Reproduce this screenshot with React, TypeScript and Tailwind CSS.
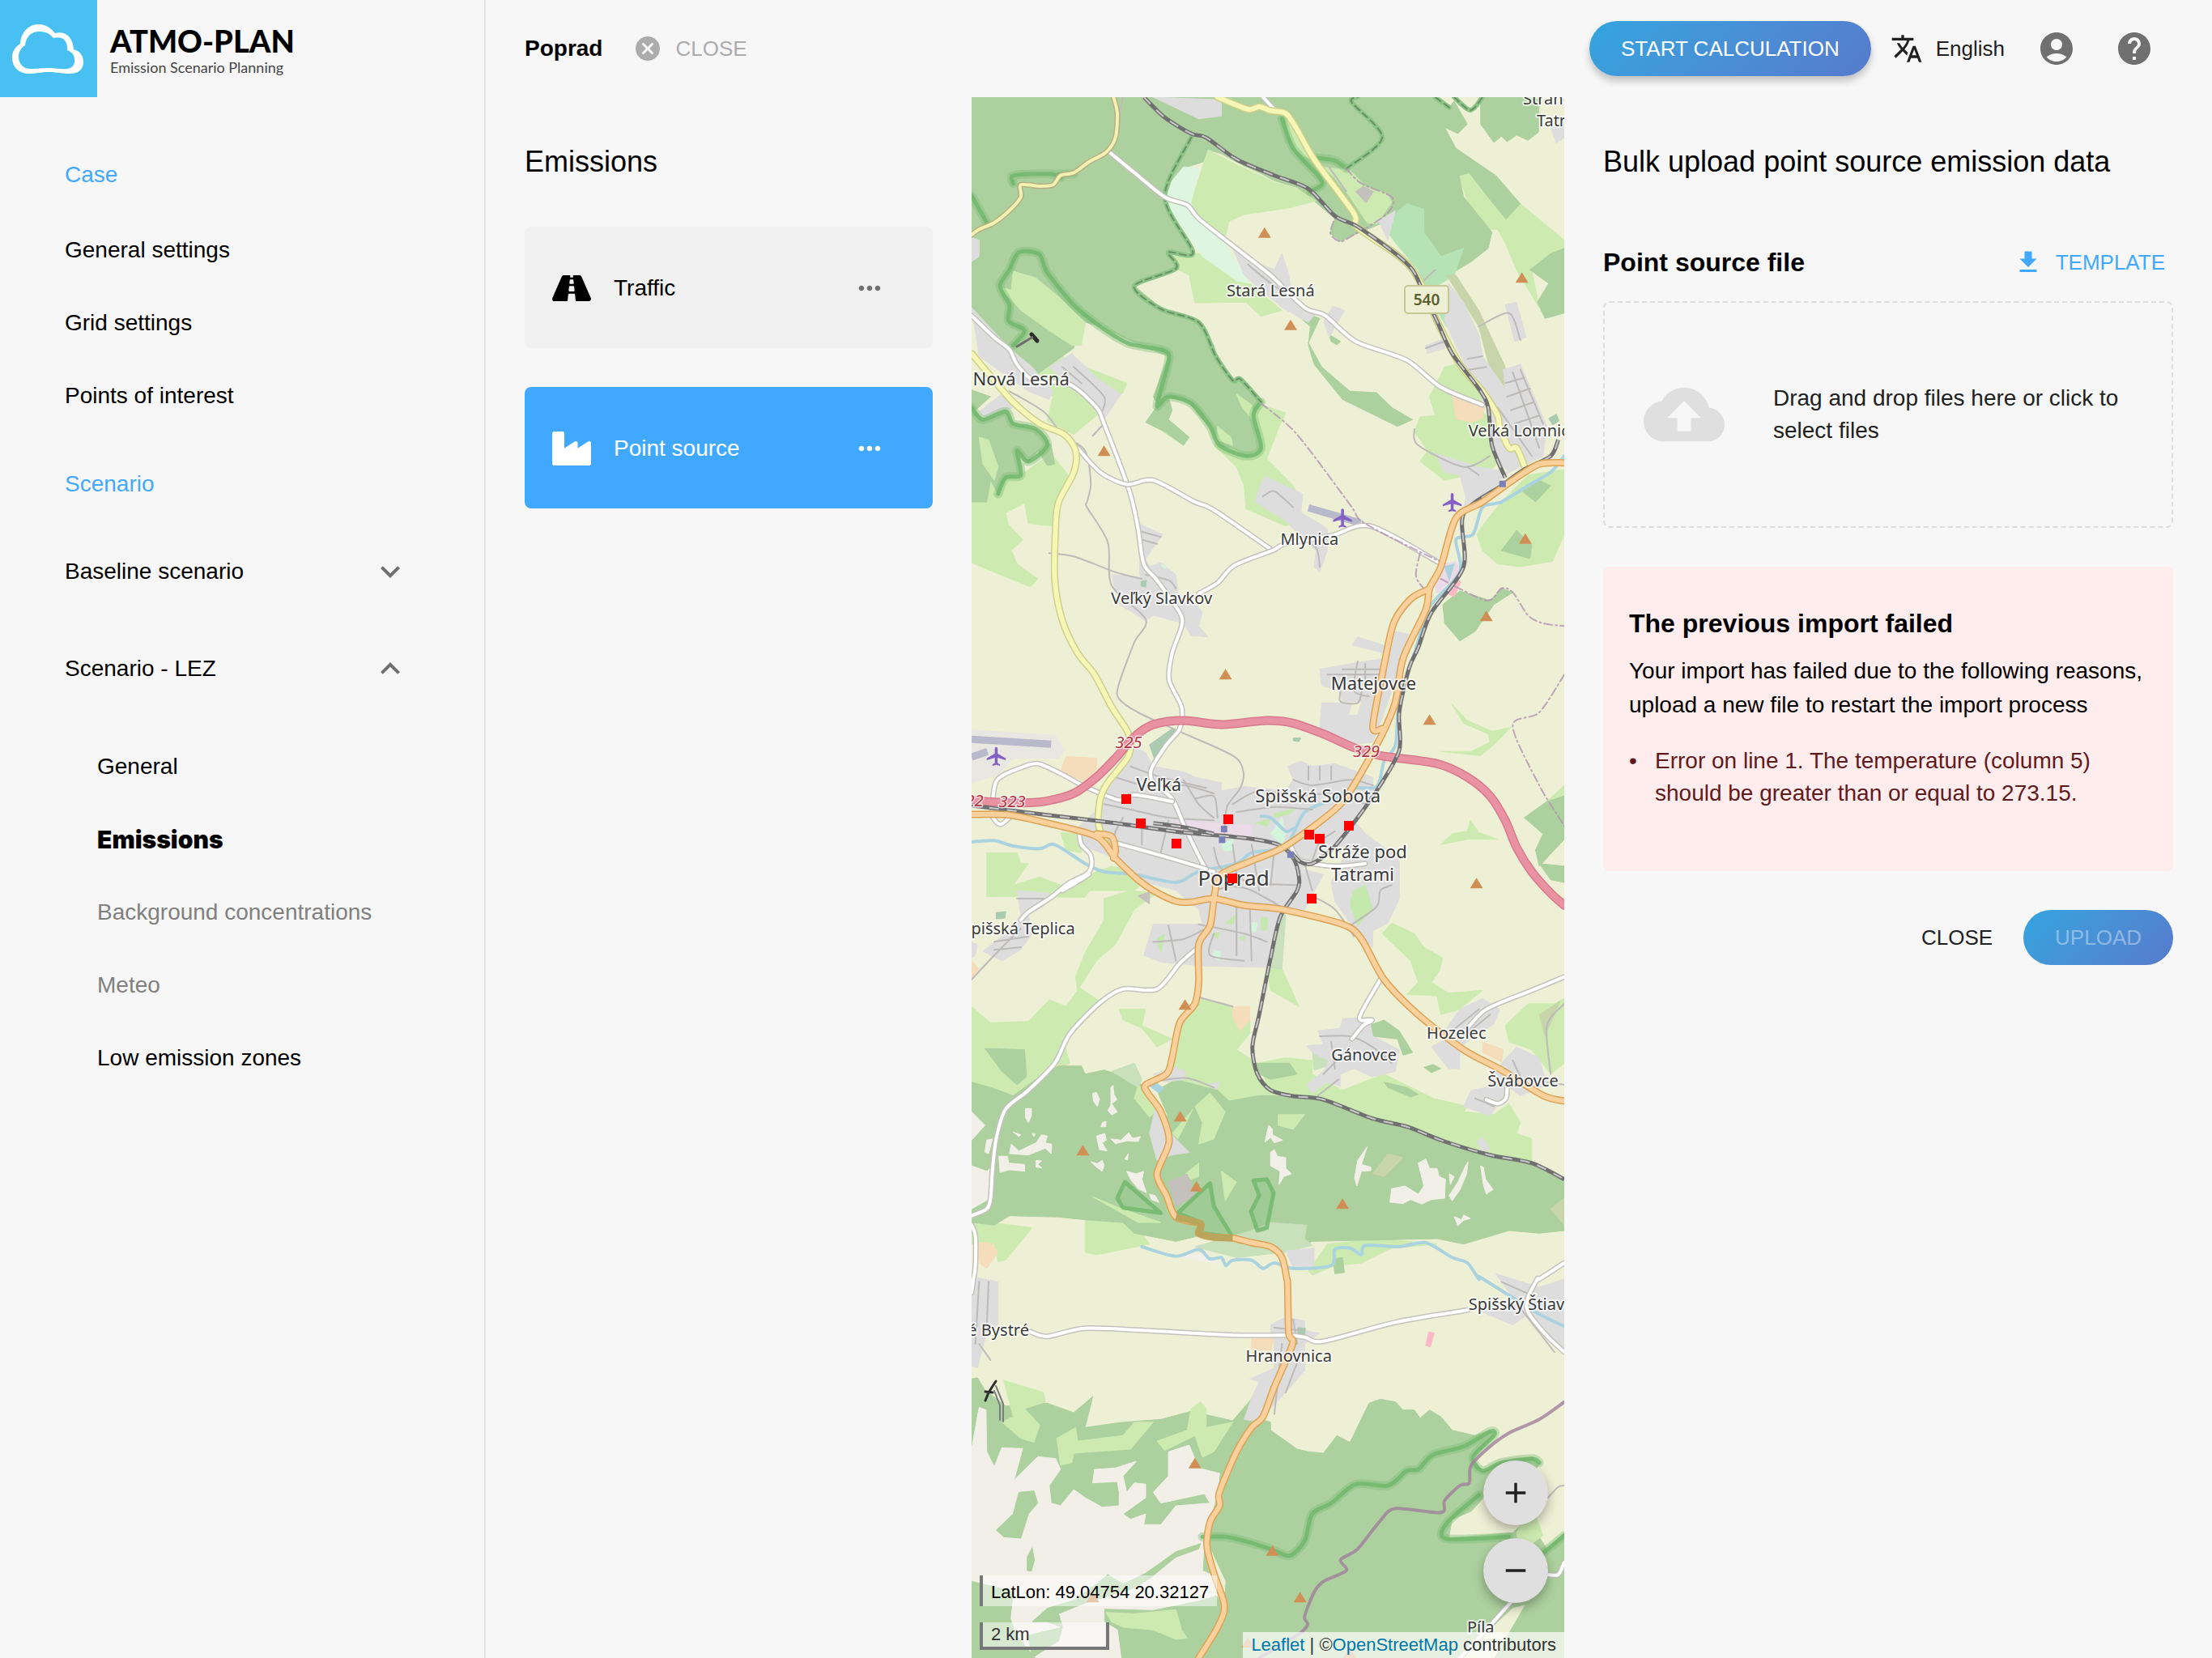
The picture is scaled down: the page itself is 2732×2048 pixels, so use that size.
import type { ReactNode } from "react";
import { FaIndustry, FaRoad } from "react-icons/fa";
import {
  MdAccountCircle,
  MdAdd,
  MdAirplanemodeActive,
  MdCancel,
  MdCloudUpload,
  MdExpandLess,
  MdExpandMore,
  MdGetApp,
  MdHelp,
  MdMoreHoriz,
  MdRemove,
  MdTranslate,
} from "react-icons/md";

/* ------------------------------------------------------------------ */
/* Map geometry                                                        */
/* ------------------------------------------------------------------ */

type Pt = [number, number];

const SHEET_TOP: Record<string, number> = { A: 0, B: 480, C: 960, D: 1440 };
const SX = 732 / 1566;
const SY = 1 / 3;

// "A 10,20 30,40 B 5,6": a sheet letter followed by points on that sheet.
function pts(src: string): Pt[] {
  let top = 0;
  const out: Pt[] = [];
  for (const token of src.trim().split(/\s+/)) {
    if (token in SHEET_TOP) {
      top = SHEET_TOP[token];
      continue;
    }
    const [x, y] = token.split(",").map(Number);
    out.push([Math.round(x * SX * 10) / 10, Math.round((y * SY + top) * 10) / 10]);
  }
  return out;
}

const polygon = (src: string) => "M" + pts(src).map((p) => p.join(" ")).join("L") + "Z";

function curve(src: string): string {
  const p = pts(src);
  let d = `M${p[0][0]} ${p[0][1]}`;
  for (let i = 0; i < p.length - 1; i++) {
    const a = p[Math.max(i - 1, 0)];
    const b = p[i];
    const c = p[i + 1];
    const e = p[Math.min(i + 2, p.length - 1)];
    const r = (n: number) => Math.round(n * 10) / 10;
    d += `C${r(b[0] + (c[0] - a[0]) / 7)} ${r(b[1] + (c[1] - a[1]) / 7)} ${r(c[0] - (e[0] - b[0]) / 7)} ${r(c[1] - (e[1] - b[1]) / 7)} ${c[0]} ${c[1]}`;
  }
  return d;
}

const FOREST = "#add19e";
const MEADOW = "#cdebb0";
const TOWN = "#dddddd";
const BARE = "#f2efe9";
const SAND = "#f5dcba";
const FARM = "#eef0d5";

const AREAS: [string, string[]][] = [
  [
    MEADOW,
    [
      "A 1288,290 1315,278 1412,452 1450,395 1566,530 1566,600 1480,640 1500,780 1440,640 1410,540 1390,490 1365,490 1320,430",
      "A 1250,1000 1280,990 1350,1100 1345,1150 1420,1300 1375,1380 1250,1420 1185,1350 1205,1310 1170,1240 1185,1185 1225,1180 1210,1110",
      "A 765,1140 830,1170 810,1230 780,1340 850,1440 870,1500 870,1560 830,1590 725,1525 720,1440 700,1370 640,1290 745,1180",
      "A 0,1360 130,1400 210,1320 255,1400 225,1500 B 225,0 220,150 150,140 140,65 90,100 95,140 135,200 105,240 120,290 175,345 155,375 60,320 0,285",
      "A 210,915 170,960 185,1010 240,960 300,1000 410,1060 400,1095 330,1180 270,1250 200,1200 215,1110 150,1040",
      "A 520,585 600,580 735,690 820,790 765,812 725,760 590,762 575,660 540,635",
      "A 505,1240 560,1290 530,1250",
      "B 1360,130 1400,60 1470,-40 1566,-60 1566,180 1535,280 1450,300 1390,290 1350,240 1335,180",
      "B 1240,985 1320,985 1370,950 1365,920 1300,880 1268,808 1310,870 1375,910 1425,895 1380,960 1345,1000",
      "B 1240,1330 1270,1290 1310,1280 1318,1240 1340,1285 1390,1310 1310,1310",
      "B 40,1360 120,1360 130,1400 150,1400 110,1480 180,1450 235,1480 370,1410 480,1440 430,1500 300,1500 C 320,40 300,85 40,82",
      "B 235,1285 290,1290 290,1360 250,1350",
      "B 1520,1170 1566,1110 1566,1180",
      "C 350,90 420,60 490,70 430,130 380,260 330,320 280,430 275,380 300,290 350,170",
      "C 0,490 50,550 150,545 205,465 250,490 285,420 340,470 240,610 260,700 180,750 140,820 0,790",
      "C 390,500 460,500 450,560 530,610 490,640 450,570 400,540",
      "C 600,455 690,490 735,530 735,590 700,650 755,700 755,740 800,800 900,820 720,860 620,800 520,760 540,690 560,540",
      "C 780,350 820,350 865,490 790,430",
      "C 1110,180 1170,220 1195,270 1245,310 1235,360 1215,400 1260,440 1350,430 1290,500 1240,520 1230,450 1150,445 1180,400 1160,320 1085,220",
      "C 755,700 830,680 900,690 900,740 980,800 1090,740 1220,830 1310,860 1300,880 1380,890 1420,850 1450,920 1440,960 1480,980 1480,1070 1370,1045 1250,990 1060,905 930,835 850,822 790,800",
      "C 1410,560 1470,480 1540,480 1566,460 1566,700 1530,740 1480,650 1420,620",
      "C 0,1280 160,1310 90,1430 70,1435 60,1370 0,1370",
      "C 300,1260 420,1270 470,1370 330,1410 300,1400",
      "C 940,1370 1080,1350 1230,1370 1110,1385 1030,1440 960,1450 900,1485 890,1470",
    ],
  ],
  [
    FOREST,
    [
      "A 0,0 1225,0 1262,38 1275,15 1310,100 1285,135 1250,112 1280,190 1385,290 1450,395 1412,452 1370,380 1315,280 1288,290 1300,370 1375,500 1365,560 1320,610 1260,660 1190,560 1080,470 1010,510 975,535 948,505 960,450 905,385 860,335 800,310 760,280 720,255 660,210 625,195 612,240 555,265 520,350 510,385 585,575 520,580 540,635 430,700 500,780 600,835 640,920 650,990 690,1050 710,1048 765,1130 740,1180 765,1300 725,1330 690,1300 655,1290 630,1220 600,1180 575,1130 510,1110 495,1145 480,1110 520,960 455,925 340,850 290,830 270,930 200,1000 160,1040 90,1010 60,900 0,780 0,510",
      "A 1345,0 1500,0 1498,130 1470,160 1440,140 1415,165 1400,145 1380,168 1345,100 1345,50",
      "A 830,770 920,820 890,910 925,1000 1000,1090 1070,1095 1110,1150 1165,1195 1125,1220 980,1120 905,990 890,920 895,850",
      "A 945,880 975,905 965,918 950,905",
      "A 490,1145 520,1110 530,1160 520,1195 575,1260 560,1290 510,1240 460,1205",
      "A 0,1085 50,1110 10,1160 30,1195 90,1165 110,1210 170,1230 210,1290 220,1360 200,1365 175,1310 150,1355 120,1310 130,1400 90,1410 70,1470 50,1420 40,1500 0,1500",
      "A 1475,640 1530,580 1566,560 1566,800 1515,820 1495,760 1525,690",
      "B 1400,240 1440,165 1480,220 1475,270",
      "B 1455,20 1500,-20 1530,0 1490,60",
      "B 1245,440 1290,390 1370,425 1400,380 1430,395 1380,440 1330,540 1290,575 1250,510",
      "B 1460,1230 1520,1170 1566,1150 1566,1310 1500,1410 1490,1350 1510,1290",
      "B 1500,1400 1566,1410 1566,1470 1530,1460",
      "C 35,645 140,650 145,750 120,780 80,730",
      "C 0,770 50,790 110,820 170,760 230,710 290,710 300,740 350,725 430,760 460,790 500,880 520,900 490,800 540,760 620,790 650,800 680,840 760,820 850,822 930,835 1060,905 1150,935 1250,990 1370,1040 1480,1070 1566,1130 1566,1320 1500,1330 1420,1320 1300,1370 1230,1350 900,1360 870,1380 690,1350 600,1340 540,1360 430,1330 400,1290 300,1280 230,1270 100,1265 60,1300 0,1290",
      "C 750,700 840,700 860,740 790,760 760,740",
      "C 1050,560 1090,540 1130,580 1165,660 1140,670 1125,610 1060,600",
      "C 1090,770 1150,790 1180,815 1160,825 1100,790",
      "C 1195,715 1220,705 1240,720 1215,735",
      "C 955,1425 980,1420 985,1475 960,1480",
      "D 0,430 15,425 35,470 90,530 200,520 270,555 320,495 300,610 400,590 500,580 580,550 690,585 745,495 755,500 745,570 790,590 790,620 860,690 890,700 930,705 965,640 1000,665 1050,520 1080,505 1120,515 1140,545 1170,545 1185,575 1210,545 1240,570 1270,620 1330,640 1370,620 1380,640 1325,720 1350,775 1400,740 1480,720 1500,745 1480,790 1380,830 1320,920 1270,950 1260,1020 1430,1000 1470,950 1520,1060 1566,1000 1566,1464 0,1464",
    ],
  ],
  [
    MEADOW,
    [
      "A 625,195 612,250 580,390 600,440 670,520 680,460 720,435 840,410 910,385 860,340 800,315 740,275 700,250",
      "A 110,645 170,670 230,740 300,835 290,920 265,920 210,870 130,790 75,705 105,715",
      "A 930,260 1000,270 1040,330 1100,360 1110,390 1070,470 1045,465 1000,370 960,300",
      "A 830,80 850,120 905,230 880,220 845,180",
      "A 700,1100 740,1140 745,1200 715,1150",
      "A 650,1220 685,1260 690,1290 650,1270",
      "A 20,1260 45,1270 70,1370 60,1420 30,1360",
      "C 440,780 500,860 470,900 430,830",
      "C 630,810 670,880 640,980 600,1000 610,920 590,860",
      "C 810,890 880,890 850,945 810,930",
      "C 530,960 585,870 560,940 545,980",
      "C 565,1110 600,1070 600,1120 580,1130",
      "C 660,1100 700,1140 670,1210",
      "C 320,1195 380,1230 500,1290 440,1290",
      "D 85,435 190,480 195,515 140,540 180,600 165,665 130,650 80,590 110,570",
      "D 225,650 275,610 280,660 400,640 430,590 480,590 420,690 270,705 265,740 235,750",
      "D 490,660 570,620 580,540 605,515 620,540 620,610 690,590 640,700 610,720 590,640 510,695",
      "D 1440,1000 1480,900 1510,1010 1450,1070",
    ],
  ],
  [
    BARE,
    [
      "C 0,880 35,930 0,985",
      "C 40,985 55,980 45,1035 35,1030",
      "C 0,1080 40,1100 60,1080 50,1200 0,1240",
      "C 142,868 158,868 158,895 150,920 142,900",
      "C 320,812 330,808 338,835 332,860 322,840",
      "C 368,790 374,782 376,815 384,835 370,850 385,880 370,892 360,875 368,855",
      "C 345,920 355,915 355,935 342,935",
      "C 110,955 130,965 125,972",
      "C 160,960 168,962 165,972",
      "C 105,1000 125,1025 170,995 185,965 200,970 195,995 212,1000 210,1035 195,1015 150,1040 100,1035",
      "C 72,1045 95,1045 98,1070 140,1075 140,1100 100,1095 75,1105",
      "C 170,1060 185,1062 175,1075 186,1088 170,1085",
      "C 330,970 352,960 356,985 345,995 358,1025 338,1020",
      "C 368,980 395,985 415,958 425,978 446,972 440,990 410,988 380,998",
      "C 315,1065 332,1072 345,1060 350,1078 345,1100 330,1085",
      "C 405,1055 414,1035 412,1058",
      "C 410,1100 435,1110 455,1100 450,1130 462,1180 440,1165 420,1130",
      "C 470,1185 485,1190 495,1215 475,1205",
      "C 785,930 795,945 795,965 822,985 800,995 790,975 775,992",
      "C 790,1030 800,1020 808,1045 830,1050 830,1090 845,1110 825,1120 812,1150 815,1100 790,1080",
      "C 1045,1010 1030,1075 1055,1085 1055,1098 1030,1100 1018,1155 1012,1125 1020,1060",
      "C 1180,1070 1200,1055 1210,1090 1230,1090 1235,1120 1252,1130 1250,1200 1215,1205 1190,1222 1160,1205 1140,1220 1105,1215 1110,1165 1145,1155 1180,1185 1195,1155",
      "C 1305,1080 1312,1065 1308,1110 1290,1170 1270,1210 1262,1190 1285,1140",
      "C 1262,1110 1275,1120 1265,1150",
      "C 1345,1080 1352,1085 1358,1130 1378,1168 1360,1185 1352,1150",
      "C 1275,1268 1295,1280 1300,1262 1318,1275 1300,1282 1285,1302",
      "C 545,1415 600,1405 660,1440 600,1440",
      "D 0,690 20,535 38,545 40,700 60,755 80,685 135,688 112,805 175,718 222,725 235,765 205,825 210,890 235,900 270,840 300,870 345,905 390,900 390,850 385,810 320,815 325,765 380,760 435,735 400,790 410,850 430,815 460,820 460,870 400,930 420,950 460,930 455,970 500,970 540,900 630,890 615,855 500,890 480,850 520,790 520,700 575,675 600,760 655,780 650,850 630,950 615,1020 610,1140 640,1160 650,1230 600,1250 480,1285 350,1280 350,1330 385,1360 395,1464 170,1464 120,1380 100,1300 60,1200 0,1180",
    ],
  ],
  [
    FOREST,
    [
      "D 125,850 165,845 175,890 150,930 130,1020 85,1015 65,990 110,930",
      "D 160,1055 166,1100 158,1142 147,1140 147,1090",
      "D 0,1180 60,1200 110,1220 90,1464 0,1464",
      "D 160,1330 200,1280 270,1250 330,1190 360,1155 400,1190 460,1150 540,1070 605,1040 600,1060 540,1090 470,1170 420,1210 300,1260 230,1300 240,1350 200,1330",
      "D 150,1380 240,1350 230,1400 160,1464",
    ],
  ],
  [MEADOW, ["D 355,1295 430,1300 540,1285 555,1360 570,1390 540,1395 480,1360 400,1350 370,1330"]],
  [
    FARM,
    [
      "D 1290,1464 1430,1280 1460,1270 1380,1464",
      "D 630,1060 670,1180 665,1270 640,1210",
      "C 0,1455 300,1440 450,1400 860,1490 0,1500",
    ],
  ],
  ["#def6e0", ["A 560,258 600,265 580,390 575,410 650,500 735,690 700,680 610,590 510,385 530,310"]],
  [
    "#b5e3b5",
    [
      "A 1150,395 1195,415 1195,500 1240,590 1300,560 1275,660 1230,700 1275,800 1255,850 1225,780 1180,640 1120,540 1080,460 1120,430",
    ],
  ],
  [
    "#c8e0bb",
    [
      "C 590,1380 740,1320 790,1290 885,1300 880,1350 900,1375 830,1400 700,1420",
      "C 800,150 830,150 820,350 780,345",
      "C 900,650 940,650 940,710 905,725",
      "C 370,730 430,700 450,760 440,790",
    ],
  ],
  [
    "#c8d5ab",
    [
      "A 1255,660 1280,660 1340,790 1410,1000 1410,1100 1370,1010 1340,850",
      "C 1060,1110 1100,1035 1140,1050 1090,1120",
      "C 1530,1240 1566,1200 1566,1300",
      "C 1500,520 1555,470 1515,600",
    ],
  ],
  [
    TOWN,
    [
      "A 0,520 20,530 20,590 0,610",
      "A 480,0 660,10 660,70 600,80",
      "A 0,780 60,870 100,930 160,1000 215,1090 205,1120 150,1090 70,1010 20,960",
      "A 20,1165 85,1095 110,1150 40,1195",
      "A 205,1000 265,950 330,1040 395,1100 350,1195 310,1130",
      "A 690,560 730,600 800,640 820,580 835,640 850,750 910,800 890,835 820,780 720,660",
      "A 930,830 955,775 985,790 945,890",
      "A 1260,690 1300,760 1340,880 1350,960 1410,1080 1405,1010 1450,990 1520,1220 1510,1330 1420,1390 1380,1330 1360,1150 1300,980 1250,830",
      "A 1200,920 1250,895 1250,930 1205,950",
      "A 1410,770 1440,760 1465,890 1435,905",
      "A 1225,1320 1340,1370 1420,1390 1330,1490 1310,1500 1290,1400 1250,1390",
      "A 1530,110 1566,100 1566,150 1545,170",
      "A 1075,460 1120,420 1100,530",
      "B 1310,0 1420,-20 1300,105",
      "B 760,10 775,-35 875,30 870,100 920,140 940,160 940,240 920,320 905,300 910,240 870,190 830,130 750,60",
      "B 440,140 505,180 460,270 470,300 500,285 540,330 545,400 600,450 610,470 600,520 625,560 580,555 560,510 480,480 460,500 390,440 370,330 445,340",
      "B 1020,560 1110,600 1120,540 1155,550 1130,680 1080,880 1060,950 1000,960 970,940 920,900 925,805 1005,805 995,850 1020,850 1030,800 980,800 970,760 925,740 920,680 1000,660 1090,640 1090,620 1005,590",
      "B 375,1060 420,960 460,990 480,1040 560,1060 590,1080 660,1100 660,1130 720,1115 830,1130 850,1090 835,1040 870,1020 900,1040 960,1030 1060,1080 1060,1110 1075,1120 1040,1200 1010,1240 1060,1320 960,1340 900,1400 870,1420 930,1440 C 880,130 820,140 780,345 620,340 500,325 455,300 480,185 610,185 600,130 540,60 B 440,1460 380,1380 285,1330 285,1260 340,1190",
      "B 1020,1270 1050,1300 1130,1380 C 1130,90 1100,180 1060,210 1060,270 1040,260 1000,180 960,100 950,30",
      "C 120,60 205,70 190,120 150,150 160,220 130,280 80,320 30,285 90,220 130,150",
      "C 0,250 15,260 10,300 0,310",
      "C 915,580 975,570 980,535 1050,530 1060,600 1130,650 1120,730 1060,750 1010,720 975,740 975,785 940,770 900,810 885,780 930,730 945,690 900,660 885,635 930,630",
      "C 1260,560 1290,500 1350,460 1395,500 1380,555 1330,600 1290,640 1290,720 1260,720 1215,640 1240,620",
      "C 1400,700 1440,640 1500,680 1520,780 1450,820 1420,790 1370,895 1300,860 1320,800 1360,790",
      "C 480,740 540,715 565,730 560,760 510,770",
      "C 620,780 655,770 650,795",
      "C 470,960 485,870 525,960 575,1030 530,1040 490,1060",
      "C 830,1395 905,1385 905,1450 850,1460",
      "C 1335,990 1350,975 1370,1020 1350,1030",
      "D 0,50 70,70 70,230 40,260 15,390 0,380",
      "D 790,230 830,200 880,215 880,250 920,260 880,300 880,400 830,480 790,540 770,590 720,580 740,500 760,440 735,430 800,390 800,290 790,265",
      "D 1385,40 1500,90 1566,60 1566,330 1470,190 1430,230 1380,200 1330,170 1430,130",
    ],
  ],
  ["#c4c1bd", ["C 520,1140 570,1110 590,1190 540,1230", "A 1015,350 1035,330 1062,350 1042,392", "C 440,80 470,65 470,110"]],
  [
    SAND,
    [
      "A 1270,1105 1355,1150 1350,1190 1320,1205 1280,1190",
      "B 250,1003 330,1010 330,1050 300,1095 235,1060",
      "C 690,490 735,490 735,540 710,580 690,530",
      "C 1350,620 1405,650 1400,695 1350,660",
      "C 20,1365 50,1365 70,1400 40,1460 20,1440",
      "C 0,320 20,350 0,385",
      "D 740,275 800,280 790,325 740,320",
    ],
  ],
  ["#e8e7e2", ["B 0,905 220,925 245,980 230,1010 110,1010 70,1070 0,1100"]],
  [
    "#ebdbe8",
    ["B 540,1240 740,1260 740,1300 540,1280", "B 1250,290 1280,280 1290,320 1230,400 1220,350"],
  ],
  ["#fbb9c5", ["B 1275,350 1293,355 1275,412 1258,400", "D 1208,255 1222,260 1212,312 1200,305"]],
  [
    "#aacbaf",
    [
      "B 470,960 530,900 545,915 510,980 485,1020",
      "B 448,355 462,350 460,375 448,372",
      "A 1525,1190 1545,1175 1552,1200 1535,1215",
      "C 65,142 90,138 88,162 65,165",
      "D 862,240 882,242 880,265 862,262",
      "B 850,935 870,935 865,948 850,945",
    ],
  ],
  [
    "#d3f5dc",
    [
      "B 790,1290 820,1230 830,1290 820,1330",
      "B 660,1330 690,1310 690,1350 670,1355",
      "C 640,285 658,285 655,320 638,305",
      "C 740,180 755,180 750,215 738,210",
      "B 500,290 515,300 510,310",
    ],
  ],
  [
    "#c5e8ac",
    [
      "B 800,1215 860,1195 840,1215 800,1230",
      "B 750,1250 790,1235 780,1262",
      "C 490,240 510,220 500,290",
      "C 670,180 700,150 690,185",
      "C 705,235 722,228 720,245",
      "C 765,160 782,160 780,205 765,205",
      "C 1010,60 1040,40 1060,130 1020,190 1000,110",
      "C 635,220 655,215 650,240",
    ],
  ],
  ["#aad3df", ["C 470,785 490,775 507,792 495,810", "B 1250,300 1275,290 1262,350"]],
];

const RESERVES = [
  "A 0,365 40,465",
  "A 110,320 112,290 210,285 235,300 230,285 270,285",
  "A 110,920 140,865 98,830 100,770 75,700 100,640 125,575 178,582 200,650 270,770 340,850 410,910 455,925 520,950 505,1060 490,1145 520,1110 580,1135 630,1220 655,1290 725,1330 765,1300 745,1180 765,1130",
  "A 820,80 850,190 915,290 925,325 895,350",
  "A 910,225 960,235 990,265",
  "A 0,1150 30,1195 90,1165 110,1210 170,1230 200,1290 150,1350 120,1310 130,1400 90,1410 70,1470",
  "D 1500,740 1480,725 1400,740 1350,770 1325,720 1380,640 1370,625 1300,680 1220,710 1180,765 1150,770 1100,825 1015,820 950,890 900,930 880,1030 840,1085 790,1060 720,1030 670,1015 610,1015",
  "D 1340,860 1255,965 1255,1022 1420,1015",
  "D 1566,1010 1510,1075",
];

const RESERVE_SHAPES = [
  "C 405,1140 500,1255 400,1235 385,1200",
  "C 545,1255 610,1170 630,1145 640,1230 690,1345 610,1330 605,1290",
  "C 745,1135 780,1130 798,1180 780,1310 755,1320 738,1250 760,1190",
];

const TREELINES = [
  "A 580,150 510,370 585,575 520,575 540,635 430,700 500,785 600,835 645,960 690,1050 710,1045 765,1130",
  "A 990,265 1085,150 1005,20 1020,0",
  "A 1262,38 1225,0",
  "A 1275,0 1318,48 1350,0",
];

const WATERS = [
  "A 1566,1330 1530,1390 1470,1440 1400,1500 B 1350,80 1325,180 1280,200 1290,320 1210,450 1175,600 1130,800 1120,960 1090,1020 1070,1115 1000,1120 960,1160 880,1210 830,1335 740,1360 700,1400 600,1430 540,1470 430,1440 350,1430 300,1400 220,1330 180,1345 110,1335 60,1315 0,1320",
  "B 765,1225 790,1230 830,1280 850,1270",
  "C 450,1380 540,1415 600,1390 630,1425 660,1420 672,1450 690,1430 740,1430 770,1460 800,1440 850,1460 950,1450 960,1390 1000,1385 1030,1410 1040,1375 1130,1380 1200,1365 1270,1420 1310,1440 1340,1500 D 1340,50 1420,120 1500,190 1566,235",
];

const STREETS = [
  "A 400,0 392,60 385,150",
  "A 100,1090 190,1165 240,1250 300,1310 315,1430 305,1500 B 305,80 360,210 370,370 460,495 430,580 388,740 390,790 440,840 540,905 690,1000 718,1060 710,1120 675,1190 668,1290",
  "C 640,60 690,45 740,60 830,130",
  "C 600,185 720,220 780,250",
  "C 640,220 630,300 720,320",
  "C 700,120 700,300",
  "C 735,120 740,320",
  "C 480,250 560,240 620,200",
  "C 520,190 540,320",
  "C 1000,190 1070,120 1080,60 1110,40",
  "C 900,80 960,130 1010,230",
  "C 970,760 915,820",
  "C 920,600 1000,600 1060,640 1110,700",
  "C 950,620 960,720",
  "C 600,455 690,490",
  "C 490,765 570,755 640,790",
  "C 0,390 60,300 130,200",
  "C 60,250 150,230",
  "C 60,280 130,270",
  "C 120,90 190,90",
  "B 380,1080 480,1120 560,1110 640,1140",
  "B 420,1040 500,1080 620,1120",
  "B 560,1090 600,1180 640,1230",
  "B 350,1180 420,1200 520,1230 640,1240",
  "B 400,1230 380,1310 480,1370 620,1410",
  "B 450,1240 450,1330",
  "B 520,1240 500,1360",
  "B 590,1160 640,1150 650,1230",
  "B 690,1180 760,1130 860,1150 960,1140 1040,1180",
  "B 700,1210 800,1190 900,1200",
  "B 850,1090 900,1110 1000,1090 1060,1110",
  "B 890,1040 890,1090",
  "B 920,1040 920,1090",
  "B 950,1040 950,1090",
  "B 640,1340 660,1420 740,1470 860,1480",
  "B 690,1330 700,1440",
  "B 740,1330 760,1500",
  "B 800,1350 790,1480",
  "B 880,1400 900,1500",
  "B 960,1280 920,1320 900,1390",
  "B 1020,650 1010,760 1050,780",
  "B 980,680 1080,680",
  "B 940,700 1080,700",
  "B 1040,660 1040,740",
  "B 975,760 975,800 1020,805 1030,765",
  "B 205,250 270,262 380,320 450,345",
  "B 450,170 500,190",
  "B 450,200 490,215",
  "B 460,330 520,350 540,380",
  "B 770,40 800,20 850,80",
  "B 860,190 910,230 920,300",
  "A 1180,700 1225,640",
  "A 1340,850 1420,800 1450,900",
  "A 1430,1020 1500,1300",
  "A 1390,1150 1480,1330",
  "A 1450,1010 1510,1210",
  "A 1410,1060 1460,1040",
  "A 1415,1110 1475,1080",
  "A 1425,1160 1485,1130",
  "A 1435,1210 1500,1180",
  "A 1310,970 1350,960",
  "A 1315,1010 1360,1000",
  "A 1170,1230 1180,1290 1300,1370 1370,1330",
  "A 1310,1370 1340,1400",
  "A 945,260 990,350",
  "A 270,1000 350,1110 340,1180",
  "A 240,1000 290,1060",
  "A 320,1255 350,1210",
  "A 730,620 800,700 850,740",
  "A 1200,930 1250,905",
  "C 1270,580 1340,500",
  "C 1300,600 1370,520",
  "C 1430,690 1460,780",
  "C 1330,830 1380,860",
  "C 1566,780 1520,770",
  "C 1530,740 1520,560 1566,480",
  "C 930,740 1000,640",
  "D 20,70 10,300",
  "D 45,70 40,240",
  "D 20,300 50,360",
  "D 800,240 870,250",
  "D 850,210 860,300",
  "D 820,300 800,560",
  "D 860,370 830,480",
  "D 1400,70 1480,120",
  "D 1440,150 1540,330",
  "D 1523,870 1550,830 1566,825",
];

const WHITE_ROADS = [
  "A 365,205 430,280 510,370 570,400 600,450 690,550 790,660 880,780 935,810 1015,905 1150,975 1240,1075 1350,1140",
  "A 0,810 60,890 100,935 120,990 165,1050 260,1065 330,1150 350,1210 410,1430 425,1500 B 440,160 455,290 490,350 550,470 555,520 530,620 522,720 555,820 550,900 515,960 475,1050 480,1100 530,1160 565,1270 615,1410 640,1430",
  "A 280,1300 340,1390 410,1435 480,1420 590,1500 B 640,90 790,235",
  "B 600,400 650,360 695,295 795,240 830,215 950,185 1055,150 1235,285",
  "A 770,0 800,45",
  "B 530,1170 430,1145 390,1165 300,1115 240,1070 175,1030 130,1045 75,1080 60,1120 55,1220 75,1255 100,1230",
  "B 285,1290 290,1330 315,1370 310,1430 240,1500 C 310,0 260,30 210,85 150,140 130,170",
  "B 385,1325 500,1370 620,1420",
  "B 845,1340 870,1390 960,1410 1040,1400",
  "C 595,275 550,330 490,425 400,425 340,475 260,590 220,700 150,800 90,870 65,980 55,1100 50,1200 40,1240 0,1265",
  "C 0,1300 10,1340 10,1450 D 5,60 0,110",
  "C 1080,390 1025,530 1058,540 1035,560 1005,610",
  "C 1566,380 1480,430 1390,480 1350,510 1310,570",
  "C 1415,780 1412,830 1390,850 1360,835",
  "C 1566,1440 1500,1500 D 1495,60 1470,130 1470,180 1520,270 1566,330",
  "D 155,255 200,272 300,242 450,250 690,268 830,268 880,275 930,290 1120,220 1310,175",
  "D 1566,1110 1550,1155 1520,1155",
  "D 1430,1250 1340,1390 1290,1464",
];

const YELLOW_MINOR = [
  "A 375,0 385,60 380,150 355,205 310,240 270,280 235,290 215,325 180,330 130,325 130,370 100,420 60,465 20,490 0,510",
];

const YELLOW_ROADS = [
  "A 650,0 730,45 760,35 790,50 830,60 860,120 905,230 1010,430 1018,480 1120,580 1160,630 1190,700 1230,830 1290,990 1350,1090 1390,1180 1395,1220 1420,1300 1440,1300 1460,1365",
  "A 0,950 60,1050 110,1130 180,1210 245,1250 275,1310 270,1390 230,1500 B 222,150 220,350 240,500 280,620 325,700 370,820 415,920 415,1000 360,1100 340,1160 335,1250 350,1310 375,1360",
];

const ORANGE_ROADS = [
  "A 1566,1355 1500,1360 1430,1420 1350,1500 B 1280,120 1240,300 1210,380 1200,460 1140,640 1120,800 1085,920 1010,1110 960,1200 830,1335 740,1390 665,1435 645,1480 C 645,50 640,90",
  "B 1205,385 1160,420 1115,510 1085,700 1060,895 1085,900",
  "B 0,1218 100,1220 200,1250 330,1300 380,1380 440,1460 C 480,60 540,100 580,103 640,90 720,115 820,130 980,185 1030,240 1090,390 1180,520 1300,650 1400,725 1510,820 1566,840",
  "B 330,1290 370,1300 380,1350 375,1380",
  "C 640,90 630,190 600,260 600,400 590,480 550,550 530,680 515,740 460,780 465,810 500,880 522,990 490,1110 515,1190 540,1270 605,1295 600,1330 640,1345 690,1348 740,1365 790,1380 820,1420 833,1500 D 835,80 838,260 848,300 800,460 770,570 740,610 700,700 655,850 655,900 630,960 622,1050 640,1150 668,1270 650,1350 600,1464",
];

const TRUNK_ROAD =
  "B 0,1165 60,1172 140,1175 200,1168 270,1140 330,1080 380,1010 430,930 480,885 560,870 660,885 780,870 850,880 930,920 1010,970 1080,1000 1230,1030 1310,1080 1370,1150 1410,1240 1440,1340 1480,1430 C 1530,70 1566,115";

const RAILS = [
  "A 455,0 510,75 580,135 620,150 700,230 800,290 890,340 960,440 1020,480 1120,580 1165,640 1190,710 1230,830 1270,950 1340,1080 1365,1150 1375,1290 1410,1410",
  "A 1550,1270 1530,1330 1460,1380 1400,1440 B 1300,105 1300,300 1215,470 1180,600 1155,680 1130,840 1130,980 1075,1120 1015,1240 950,1350 900,1400 870,1395 845,1360",
  "B 0,1185 200,1220 380,1250 560,1285 720,1305 810,1330 850,1380 865,1450 C 860,60 815,160 790,310 760,520 742,640 755,740 790,800 850,822 930,835 1060,905 1150,935 1250,990 1370,1040 1480,1070 1566,1130",
  "B 480,1250 560,1265 640,1290",
];

const BORDERS = [
  "A 765,1135 860,1250 1000,1510 B 1040,140 1235,280",
  "B 1185,250 1175,340 1215,410",
  "B 1240,345 1360,425 1400,380 1430,395 1470,480 1510,510 1566,520",
  "B 1566,700 1500,840 1430,890 1500,1110 1566,1260",
  "A 990,265 1030,320 1110,370 1105,420 1060,470 1010,510 975,535 948,505 960,450",
];

const COUNTY_BORDER =
  "D 1566,515 1500,580 1420,630 1370,680 1320,750 1315,815 1290,825 1250,880 1240,925 1120,910 1080,955 1020,1060 975,1100 990,1140 930,1180 905,1220 880,1310 888,1340 860,1380 760,1464";

const PEAKS =
  "A 774,503 843,845 350,1312 1454,670 B 671,700 1463,197 1360,484 1210,868 1334,1474 C 564,484 551,898 294,1024 594,1157 980,1222 D 590,743 795,1067 868,1240 320,1240 730,1408 1000,1445";
const PLANES = "B 980,120 1270,62 65,1003";
const STATIONS = "A 1403,1433 B 667,1272 662,1312 843,1367";
const SOURCES =
  "B 409,1160 447,1250 542,1325 677,1235 893,1293 919,1307 996,1260 689,1456 C 899,90";

type Anchor = "start" | "middle" | "end";
const LABELS: [string, string, Anchor, number][] = [
  ["Stráne pod", "A 1457,27", "start", 20],
  ["Tatrami", "A 1493,107", "start", 20],
  ["Stará Lesná", "A 790,738", "middle", 20],
  ["Nová Lesná", "A 131,1068", "middle", 22],
  ["Veľká Lomnica", "A 1313,1258", "start", 20],
  ["Mlynica", "B 893,220", "middle", 20],
  ["Veľký Slavkov", "B 502,437", "middle", 20],
  ["Matejovce", "B 1062,755", "middle", 22],
  ["Veľká", "B 495,1130", "middle", 22],
  ["Spišská Sobota", "B 915,1173", "middle", 22],
  ["Stráže pod", "B 1033,1380", "middle", 22],
  ["Tatrami", "B 1033,1465", "middle", 22],
  ["Poprad", "B 692,1483", "middle", 26],
  ["Spišská Teplica", "C 273,222", "end", 20],
  ["Hozelec", "C 1281,609", "middle", 20],
  ["Gánovce", "C 1037,690", "middle", 20],
  ["Švábovce", "C 1457,785", "middle", 20],
  ["Nové Bystré", "D 152,269", "end", 20],
  ["Hranovnica", "D 838,367", "middle", 20],
  ["Spišský Štiavnik", "D 1313,173", "start", 20],
  ["Píla", "D 1345,1370", "middle", 20],
];

const JUNCTIONS: [string, string][] = [
  ["325", "B 415,972"],
  ["329", "B 1043,1005"],
  ["323", "B 107,1192"],
  ["322", "B -4,1187"],
];

function Cased({ d, casing, fill, width }: { d: string; casing: string; fill: string; width: number }) {
  return (
    <>
      <path d={d} stroke={casing} strokeWidth={width + 3} />
      <path d={d} stroke={fill} strokeWidth={width} />
    </>
  );
}

function MapDrawing() {
  return (
    <svg
      viewBox="0 0 732 1928"
      preserveAspectRatio="xMidYMid slice"
      className="absolute inset-0 h-full w-full"
      role="img"
      aria-label="Map of Poprad with point sources"
    >
      <rect width="732" height="1928" fill={FARM} />
      {AREAS.map(([fill, shapes], i) => (
        <path key={i} d={shapes.map(polygon).join("")} fill={fill} stroke={fill} strokeWidth="1" strokeLinejoin="round" />
      ))}
      <g fill="none" strokeLinejoin="round" strokeLinecap="round">
        <g stroke="#7dbd78" strokeWidth="11" opacity="0.4">
          {RESERVES.map((s) => (
            <path key={s} d={curve(s)} />
          ))}
        </g>
        <g stroke="#6fb76b" strokeWidth="5" opacity="0.8">
          {RESERVES.map((s) => (
            <path key={s} d={curve(s)} />
          ))}
        </g>
        <g stroke="#6fb76b" strokeWidth="5" fill="#8cc486" fillOpacity="0.5" opacity="0.8">
          {RESERVE_SHAPES.map((s) => (
            <path key={s} d={polygon(s)} />
          ))}
        </g>
        <g>
          {TREELINES.map((s) => (
            <g key={s}>
              <path d={curve(s)} stroke="#8cc486" strokeWidth="6" />
              <path d={curve(s)} stroke="#6b8f68" strokeWidth="2" strokeDasharray="8 5" />
            </g>
          ))}
        </g>
        <g stroke="#aad3df" strokeWidth="4">
          {WATERS.map((s) => (
            <path key={s} d={curve(s)} />
          ))}
        </g>
        <g stroke="#b9b9cc" strokeWidth="9" strokeLinecap="butt">
          <path d={curve("B 0,940 210,958")} />
          <path d={curve("B 0,1005 42,985")} />
          <path d={curve("B 890,82 1028,138")} />
        </g>
        <g stroke="#bdbbb9" strokeWidth="2">
          {STREETS.map((s) => (
            <path key={s} d={curve(s)} />
          ))}
        </g>
        {WHITE_ROADS.map((s) => (
          <Cased key={s} d={curve(s)} casing="#c4c2bd" fill="#ffffff" width={4} />
        ))}
        <g stroke="#b394b4" strokeWidth="2" strokeDasharray="10 4 2 4" opacity="0.8">
          {BORDERS.map((s) => (
            <path key={s} d={curve(s)} />
          ))}
        </g>
        <path d={curve(COUNTY_BORDER)} stroke="#a07f9c" strokeWidth="4" opacity="0.8" />
        {YELLOW_MINOR.map((s) => (
          <Cased key={s} d={curve(s)} casing="#b5b184" fill="#f3f2b2" width={4} />
        ))}
        {YELLOW_ROADS.map((s) => (
          <Cased key={s} d={curve(s)} casing="#cdd08b" fill="#f6f7b6" width={6} />
        ))}
        <Cased d={curve(TRUNK_ROAD)} casing="#d9798c" fill="#e892a2" width={8} />
        {RAILS.map((s) => (
          <g key={s}>
            <path d={curve(s)} stroke="#707070" strokeWidth="5" strokeLinecap="butt" />
            <path d={curve(s)} stroke="#c8c8c8" strokeWidth="2" strokeDasharray="12 10" strokeLinecap="butt" />
          </g>
        ))}
        {ORANGE_ROADS.map((s) => (
          <path key={s} d={curve(s)} stroke="#dba355" strokeWidth="9" />
        ))}
        {ORANGE_ROADS.map((s) => (
          <path key={s} d={curve(s)} stroke="#fad09c" strokeWidth="6" />
        ))}
        <path
          d={curve("C 540,1270 605,1295 600,1330 640,1345 690,1348")}
          stroke="#b9a65c"
          strokeWidth="8"
          strokeLinecap="butt"
        />
        <g stroke="#2c2c2c" strokeWidth="3">
          <path d="M74 293l7 8" strokeWidth="5" />
          <path d="M56 308l20-12" stroke="#6c6c6c" strokeDasharray="2 2" />
          <path d="M30 1586l-9 14M17 1599l9 1M21 1600l-4 10" />
          <path d="M30 1592l9 22v22M28 1598l7 18v18" stroke="#7c7c7c" strokeWidth="2" />
        </g>
      </g>
      {pts(PEAKS).map(([x, y]) => (
        <path key={`${x}-${y}`} d={`M${x} ${y - 7}l8 13h-16z`} fill="#d08f55" />
      ))}
      {pts(PLANES).map(([x, y]) => (
        <MdAirplanemodeActive key={`${x}-${y}`} x={x - 14} y={y - 14} width={28} height={28} color="#8461c4" />
      ))}
      {pts(STATIONS).map(([x, y]) => (
        <rect key={`${x}-${y}`} x={x - 4} y={y - 4} width="8" height="8" fill="#7a80b5" />
      ))}
      <rect x="535" y="233" width="54" height="34" rx="4" fill="#eef0d5" stroke="#c5c795" strokeWidth="2" />
      <text x="562" y="257" textAnchor="middle" fontSize="19" fontWeight="600" fill="#5c5e2d" fontFamily='"Noto Sans", sans-serif'>
        540
      </text>
      <g fontFamily='"Noto Sans", sans-serif' paintOrder="stroke" strokeLinejoin="round">
        {LABELS.map(([name, at, anchor, size]) => {
          const [x, y] = pts(at)[0];
          return (
            <text
              key={at}
              x={x}
              y={y}
              textAnchor={anchor}
              fontSize={size}
              fill="#3a3a3a"
              stroke="#ffffff"
              strokeOpacity="0.7"
              strokeWidth="4"
            >
              {name}
            </text>
          );
        })}
        {JUNCTIONS.map(([name, at]) => {
          const [x, y] = pts(at)[0];
          return (
            <text
              key={name}
              x={x}
              y={y}
              textAnchor="middle"
              fontSize="20"
              fontStyle="italic"
              fill="#b0353f"
              stroke="#ffffff"
              strokeOpacity="0.7"
              strokeWidth="3"
            >
              {name}
            </text>
          );
        })}
      </g>
      {pts(SOURCES).map(([x, y]) => (
        <rect key={`${x}-${y}`} x={Math.round(x) - 6} y={Math.round(y) - 6} width="12" height="12" fill="#ff0000" />
      ))}
    </svg>
  );
}

/* ------------------------------------------------------------------ */
/* Page                                                                */
/* ------------------------------------------------------------------ */

function Logo() {
  return (
    <a href="#" className="flex h-[120px] items-center">
      <svg viewBox="0 0 120 120" className="size-[120px] shrink-0 bg-[#48c1f2]" aria-hidden="true">
        <path
          fill="#ffffff"
          fillRule="evenodd"
          d="M48 30C57 30 63 35 68 41C80 38 90 45 91 61C99 63 103 69 103 77C103 86 96 91 87 91C77 91 70 89 60 89C51 89 45 91 36 91C23 91 15 83 15 71C15 63 19 58 25 54C26 40 35 30 48 30ZM48 39C38 39 32 46 31 56C26 59 23 64 23 70C23 79 29 85 38 85C47 85 52 84 61 84C70 84 75 86 83 85C89 84 93 80 92 74C92 68 89 64 83 62C84 50 77 44 66 47C61 41 56 39 48 39Z"
        />
      </svg>
      <span className="ml-4 flex flex-col pt-1 font-['Lato']">
        <span className="text-[38px] leading-[42px] font-black text-black">ATMO-PLAN</span>
        <span className="text-[18px] leading-6 text-[#444444]">Emission Scenario Planning</span>
      </span>
    </a>
  );
}

function NavLink({ children, tone = "text-black" }: { children: ReactNode; tone?: string }) {
  return (
    <li>
      <a href="#" className={`flex h-[90px] items-center ${tone}`}>
        {children}
      </a>
    </li>
  );
}

function Sidebar() {
  return (
    <aside className="flex flex-col border-r-2 border-[#e6e6e6]">
      <Logo />
      <nav className="flex flex-col pt-16 pr-[92px] pl-20">
        <h3 className="flex h-16 items-center text-[#42a9ff]">Case</h3>
        <ul className="mt-4">
          <NavLink>General settings</NavLink>
          <NavLink>Grid settings</NavLink>
          <NavLink>Points of interest</NavLink>
        </ul>
        <h3 className="mt-8 flex h-16 items-center text-[#42a9ff]">Scenario</h3>
        <button type="button" aria-expanded="false" className="mt-4 flex h-[120px] items-center justify-between text-black">
          Baseline scenario
          <MdExpandMore size={48} color="#707070" aria-hidden="true" />
        </button>
        <button type="button" aria-expanded="true" className="flex h-[120px] items-center justify-between text-black">
          Scenario - LEZ
          <MdExpandLess size={48} color="#707070" aria-hidden="true" />
        </button>
        <ul className="mt-4 pl-10">
          <NavLink>General</NavLink>
          <NavLink tone="font-['Inter'] text-[30px] font-black text-black">Emissions</NavLink>
          <NavLink tone="text-[#808080]">Background concentrations</NavLink>
          <NavLink tone="text-[#808080]">Meteo</NavLink>
          <NavLink>Low emission zones</NavLink>
        </ul>
      </nav>
    </aside>
  );
}

function Header() {
  return (
    <header className="flex h-[120px] items-center justify-between pr-[72px] pl-12">
      <div className="flex items-center">
        <h1 className="text-[28px] font-bold text-black">Poprad</h1>
        <button type="button" className="ml-[38px] flex items-center gap-4 text-[26px] text-[#acacac]">
          <MdCancel size={36} aria-hidden="true" />
          CLOSE
        </button>
      </div>
      <div className="flex items-center text-[26px]">
        <button
          type="button"
          className="h-[68px] rounded-full bg-linear-135 from-[#31a5df] to-[#557acc] px-[39px] text-white shadow-[0_6px_10px_rgba(0,0,0,0.22)]"
        >
          START CALCULATION
        </button>
        <button type="button" className="ml-6 flex items-center gap-4 text-[#212121]">
          <MdTranslate size={40} aria-hidden="true" />
          English
        </button>
        <button type="button" aria-label="Account" className="ml-10 text-[#707070]">
          <MdAccountCircle size={48} />
        </button>
        <button type="button" aria-label="Help" className="ml-12 text-[#707070]">
          <MdHelp size={48} />
        </button>
      </div>
    </header>
  );
}

function EmissionCard({ icon, label, tone, dots }: { icon: ReactNode; label: string; tone: string; dots: string }) {
  return (
    <article className={`flex h-[150px] items-center rounded-lg pt-[2px] pr-[58px] pl-[34px] ${tone}`}>
      {icon}
      <span className="ml-7 flex-1">{label}</span>
      <button type="button" aria-label={`${label} options`} className={dots}>
        <MdMoreHoriz size={40} />
      </button>
    </article>
  );
}

function EmissionsColumn() {
  return (
    <section className="flex flex-col px-12 pt-14">
      <h2 className="text-[36px] leading-12 text-black">Emissions</h2>
      <div className="mt-14 flex flex-col gap-12">
        <EmissionCard
          icon={<FaRoad size={48} aria-hidden="true" />}
          label="Traffic"
          tone="bg-[#f0f0f0] text-black"
          dots="text-[#707070]"
        />
        <EmissionCard
          icon={<FaIndustry size={48} aria-hidden="true" />}
          label="Point source"
          tone="bg-[#40a9ff] text-white"
          dots="text-white"
        />
      </div>
    </section>
  );
}

const ZOOM_BUTTON =
  "flex size-20 items-center justify-center rounded-full bg-[#dfdfdf] text-[#212121] shadow-[0_6px_14px_rgba(0,0,0,0.3)]";

function MapView() {
  return (
    <section className="relative min-h-[1000px] overflow-hidden">
      <MapDrawing />
      <div className="absolute right-5 bottom-[68px] flex flex-col gap-4">
        <button type="button" aria-label="Zoom in" className={ZOOM_BUTTON}>
          <MdAdd size={42} />
        </button>
        <button type="button" aria-label="Zoom out" className={ZOOM_BUTTON}>
          <MdRemove size={42} />
        </button>
      </div>
      <div className="absolute bottom-[10px] left-[10px] flex flex-col items-start gap-5 text-[22px] leading-[30px]">
        <div className="border-l-4 border-[#777777] bg-white/50 px-[10px] pt-[6px] pb-[2px] text-black">
          LatLon: 49.04754 20.32127
        </div>
        <div className="w-40 border-4 border-t-0 border-[#777777] bg-white/50 px-[10px] text-[#333333]">2 km</div>
      </div>
      <div className="absolute right-0 bottom-0 bg-white/70 px-[10px] text-[22px] leading-8 text-[#333333]">
        <a href="#" className="text-[#0078a8]">
          Leaflet
        </a>{" "}
        | ©
        <a href="#" className="text-[#0078a8]">
          OpenStreetMap
        </a>{" "}
        contributors
      </div>
    </section>
  );
}

function UploadPanel() {
  return (
    <section className="flex flex-col px-12 pt-14">
      <h2 className="text-[36px] leading-12 text-black">Bulk upload point source emission data</h2>
      <div className="mt-[70px] flex h-[60px] items-center justify-between pr-[10px]">
        <h3 className="text-[32px] font-bold text-black">Point source file</h3>
        <a href="#" className="flex items-center gap-4 text-[26px] text-[#40a9ff]">
          <MdGetApp size={36} aria-hidden="true" />
          TEMPLATE
        </a>
      </div>
      <label className="mt-[18px] flex h-[280px] cursor-pointer items-center gap-[60px] rounded-lg border-2 border-dashed border-[#dedede] px-12">
        <MdCloudUpload size={100} className="shrink-0 text-[#dfdfdf]" aria-hidden="true" />
        <span className="leading-10 text-[#212121]">Drag and drop files here or click to select files</span>
        <input type="file" className="sr-only" />
      </label>
      <div role="alert" className="mt-12 rounded-lg bg-[#ffecec] px-8 pt-[46px] pb-[76px]">
        <h3 className="text-[32px] leading-12 font-bold text-black">The previous import failed</h3>
        <p className="mt-[14px] leading-[42px] text-black">
          Your import has failed due to the following reasons, upload a new file to restart the import process
        </p>
        <ul className="mt-7 leading-10 text-[#611a1c]">
          <li className="flex">
            <span className="w-8 shrink-0" aria-hidden="true">
              •
            </span>
            Error on line 1. The temperature (column 5) should be greater than or equal to 273.15.
          </li>
        </ul>
      </div>
      <div className="mt-12 flex justify-end gap-[38px] text-[26px]">
        <button type="button" className="text-[#212121]">
          CLOSE
        </button>
        <button
          type="button"
          disabled
          className="h-[68px] rounded-full bg-linear-135 from-[#31a5df] to-[#557acc] px-[39px] text-white/40"
        >
          UPLOAD
        </button>
      </div>
    </section>
  );
}

export default function App() {
  return (
    <div className="grid min-h-screen grid-cols-[600px_1fr] bg-[#f7f7f7] font-['Liberation_Sans',Arial,sans-serif] text-[28px]">
      <Sidebar />
      <div className="flex flex-col">
        <Header />
        <main className="grid flex-1 grid-cols-[600px_1fr_800px]">
          <EmissionsColumn />
          <MapView />
          <UploadPanel />
        </main>
      </div>
    </div>
  );
}
